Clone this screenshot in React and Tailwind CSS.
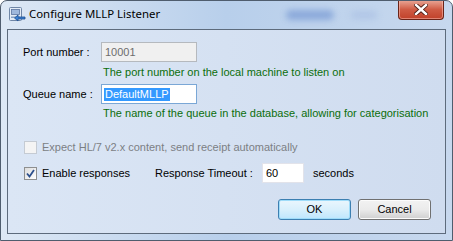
import React from "react";

const ui = { fontFamily: '"Liberation Sans", Tahoma, sans-serif' };
const title = { fontFamily: '"Noto Sans", "Open Sans", sans-serif' };

function AppIcon() {
  return (
    <svg width="18" height="18" viewBox="0 0 18 18">
      <rect x="1.5" y="1.5" width="12" height="13" rx="1" fill="#e4ecf6" stroke="#6f86a6" />
      <rect x="3.5" y="3.5" width="8" height="5" fill="#9fb8dc" stroke="#5c76a0" strokeWidth="0.8" />
      <rect x="3" y="10.5" width="9" height="1.5" fill="#8aa2c4" />
      <path d="M17 11 H10 V9 L6.5 12 L10 15 V13 H17 Z" fill="#3a7fd0" stroke="#1d4f92" strokeWidth="0.8" />
    </svg>
  );
}

function CloseButton() {
  return (
    <div className="w-[46px] h-[20px] rounded-b-[4px] border border-t-0 border-[#6a2418] bg-gradient-to-b from-[#e9a899] via-[#cf5b44] to-[#c1412a] flex items-center justify-center shadow-[inset_0_0_0_1px_rgba(255,200,190,0.5)]">
      <svg width="14" height="11" viewBox="0 0 14 11">
        <path d="M2 1 L12 10 M12 1 L2 10" stroke="#4a1a12" strokeWidth="4.2" strokeLinecap="square" />
        <path d="M2 1 L12 10 M12 1 L2 10" stroke="#ffffff" strokeWidth="2.4" strokeLinecap="square" />
      </svg>
    </div>
  );
}

function CheckBox({ checked, disabled }) {
  return (
    <div
      className={`w-[13px] h-[13px] border flex items-center justify-center ${
        disabled
          ? "border-[#c5cbd3] bg-[#f4f4f4]"
          : "border-[#8e8f8f] bg-gradient-to-br from-[#dcdcdc] to-[#ffffff]"
      }`}
    >
      {checked && (
        <svg width="9" height="9" viewBox="0 0 9 9">
          <path d="M1 4.5 L3.5 7.5 L8 1" fill="none" stroke="#2c4f8c" strokeWidth="1.8" />
        </svg>
      )}
    </div>
  );
}

function Button({ children, focused }) {
  return (
    <div
      className={`w-[73px] h-[21px] rounded-[3px] border flex items-center justify-center text-[11px] text-black ${
        focused
          ? "border-[#3c7fb1] bg-gradient-to-b from-[#eaf6fd] via-[#d9f0fc] to-[#bee6fd] shadow-[inset_0_0_0_1px_#9fdcf9]"
          : "border-[#707070] bg-gradient-to-b from-[#f2f2f2] via-[#ebebeb] to-[#cfcfcf] shadow-[inset_0_0_0_1px_#fcfcfc]"
      }`}
    >
      {children}
    </div>
  );
}

export default function App() {
  return (
    <div className="w-[453px] h-[241px] bg-white">
      <div className="w-[453px] h-[241px] rounded-t-[7px] border border-[#4f5d6e] bg-gradient-to-r from-[#dde8f5] via-[#b8cfeb] to-[#c7d8ee] flex flex-col overflow-hidden">
        {/* title bar */}
        <div className="h-[28px] flex items-start pl-[7px] relative">
          <div className="mt-[5px]">
            <AppIcon />
          </div>
          <div className="ml-[3px] mt-[5px] text-[11.4px] text-black leading-[16px]" style={title}>
            Configure MLLP Listener
          </div>
          <div className="absolute left-[285px] top-[9px] w-[48px] h-[10px] rounded-full bg-[#7f9fd6] blur-[3px] opacity-80" />
          <div className="absolute left-[350px] top-[10px] w-[26px] h-[8px] rounded-full bg-[#aac0e4] blur-[3px] opacity-70" />
          <div className="absolute left-[397px] top-[-1px]">
            <CloseButton />
          </div>
        </div>

        {/* client area */}
        <div
          className="flex-1 mx-[6px] mb-[6px] border border-[#5d6b7c] bg-gradient-to-r from-[#dbe6f5] to-[#cfdcef] text-[11px] text-black relative"
          style={ui}
        >
          <div className="pl-[15px] pt-[12px] flex flex-col">
            <div className="flex items-center h-[20px]">
              <div className="w-[78px]">Port number :</div>
              <div className="w-[96px] h-[20px] border border-[#b5b9be] bg-[#f0f0f0] text-[#6d6d6d] pl-[3px] flex items-center">
                10001
              </div>
            </div>
            <div className="ml-[80px] mt-[3px] h-[14px] leading-[14px] text-[#0b6e0b]">
              The port number on the local machine to listen on
            </div>

            <div className="flex items-center h-[20px] mt-[5px]">
              <div className="w-[78px]">Queue name :</div>
              <div className="w-[96px] h-[20px] border border-[#7aa7d6] bg-white pl-[2px] flex items-center">
                <span className="bg-[#3399ff] text-white px-[1px] leading-[13px]">DefaultMLLP</span>
              </div>
            </div>
            <div className="ml-[80px] mt-[2px] h-[14px] leading-[14px] text-[#0b6e0b]">
              The name of the queue in the database, allowing for categorisation
            </div>

            <div className="flex items-center mt-[21px] h-[13px] ml-[1px]">
              <CheckBox disabled />
              <div className="ml-[5px] text-[#7c7f84]">Expect HL/7 v2.x content, send receipt automatically</div>
            </div>

            <div className="flex items-center mt-[9px] h-[20px] ml-[1px]">
              <CheckBox checked />
              <div className="ml-[5px] w-[113px]">Enable responses</div>
              <div className="w-[107px]">Response Timeout :</div>
              <div className="w-[42px] h-[20px] border border-[#e2e3ea] bg-white pl-[3px] flex items-center">60</div>
              <div className="ml-[9px]">seconds</div>
            </div>

            <div className="flex justify-end mt-[16px] pr-[14px] gap-[7px]">
              <Button focused>OK</Button>
              <Button>Cancel</Button>
            </div>
          </div>
        </div>
      </div>
    </div>
  );
}
